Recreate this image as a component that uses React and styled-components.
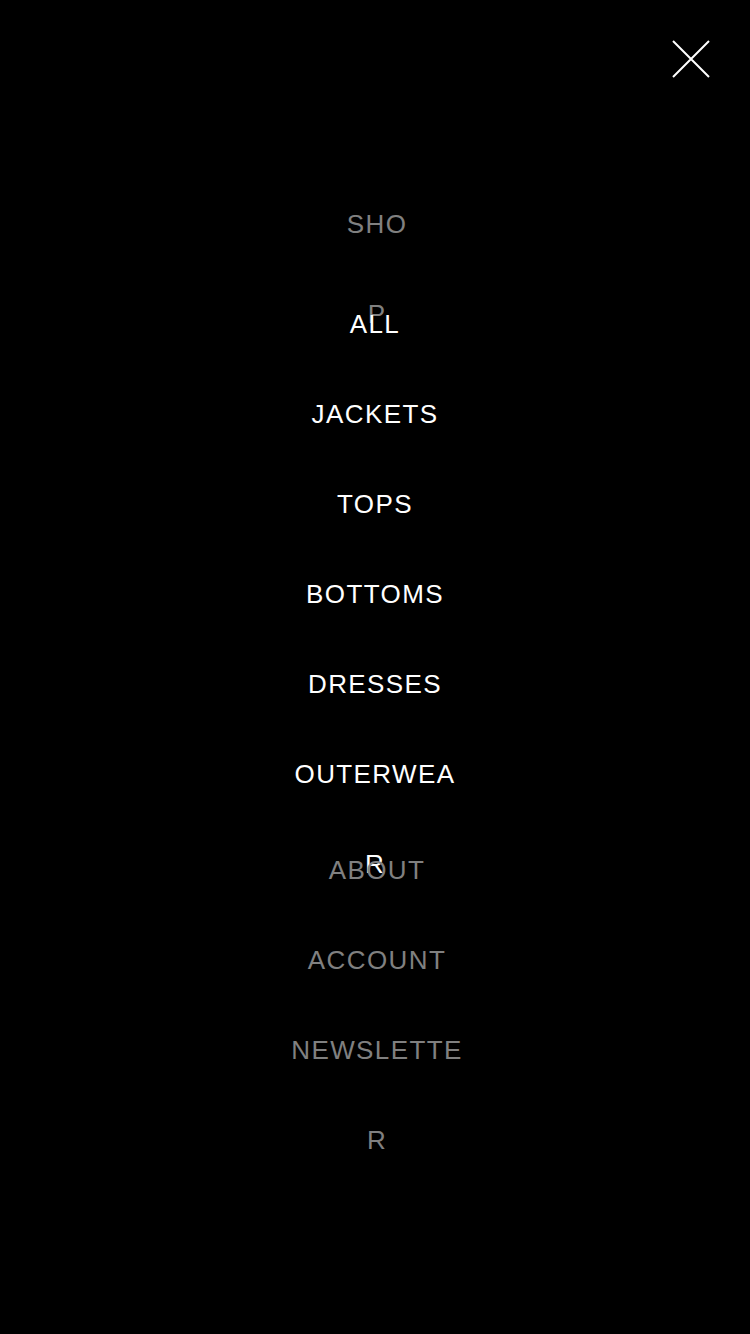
import React from 'react';
import styled, { createGlobalStyle } from 'styled-components';

const GlobalStyle = createGlobalStyle`
  html, body {
    margin: 0;
    padding: 0;
    background: #000;
  }
  body {
    font-family: "Liberation Sans", Arial, sans-serif;
  }
`;

const Screen = styled.div`
  position: relative;
  width: 750px;
  height: 1334px;
  background: #000;
  overflow: hidden;
`;

const CloseButton = styled.button`
  position: absolute;
  top: 40px;
  right: 40px;
  width: 38px;
  height: 38px;
  padding: 0;
  border: 0;
  background: transparent;
  cursor: pointer;
`;

const Nav = styled.nav`
  display: flex;
  flex-direction: column;
  align-items: center;
  padding-top: 179px;
`;

const Label = styled.a`
  display: block;
  width: ${(p) => p.$width}px;
  height: ${(p) => p.$height || 90}px;
  margin-left: ${(p) => (p.$muted ? 4 : 0)}px;
  line-height: 90px;
  font-size: 26px;
  letter-spacing: 1.4px;
  text-align: center;
  word-break: break-all;
  color: ${(p) => (p.$muted ? '#808080' : '#fff')};
  text-decoration: none;
  text-transform: uppercase;
`;

const SubList = styled.ul`
  display: flex;
  flex-direction: column;
  align-items: center;
  margin: 0 0 6px;
  padding: 0;
  list-style: none;
`;

const shopItems = ['All', 'Jackets', 'Tops', 'Bottoms', 'Dresses', 'Outerwear'];
const links = ['About', 'Account', 'Newsletter'];

const CloseIcon = () => (
  <svg width="38" height="38" viewBox="0 0 38 38">
    <path d="M1 1 L37 37 M37 1 L1 37" stroke="#fff" strokeWidth="2" fill="none" />
  </svg>
);

const App = () => (
  <Screen>
    <GlobalStyle />
    <CloseButton aria-label="Close">
      <CloseIcon />
    </CloseButton>
    <Nav>
      <Label $muted $width={70} $height={100}>Shop</Label>
      <SubList>
        {shopItems.map((item) => (
          <li key={item}>
            <Label $width={176}>{item}</Label>
          </li>
        ))}
      </SubList>
      {links.map((item) => (
        <Label key={item} $muted $width={176}>{item}</Label>
      ))}
    </Nav>
  </Screen>
);

export default App;
